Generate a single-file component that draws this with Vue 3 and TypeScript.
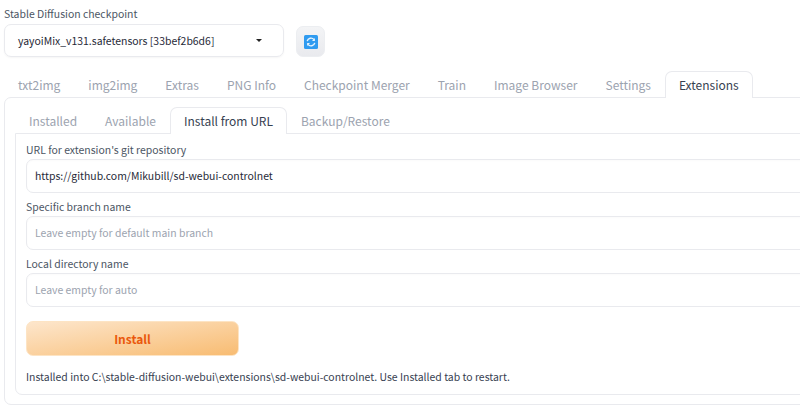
<script setup lang="ts">
const mainTabs = ['txt2img', 'img2img', 'Extras', 'PNG Info', 'Checkpoint Merger', 'Train', 'Image Browser', 'Settings', 'Extensions']
const subTabs = ['Installed', 'Available', 'Install from URL', 'Backup/Restore']
</script>

<template>
  <div class="page">
    <div class="label top-label">Stable Diffusion checkpoint</div>
    <div class="model-row">
      <div class="select">
        <span>yayoiMix_v131.safetensors [33bef2b6d6]</span>
        <i class="caret"></i>
      </div>
      <button class="refresh" type="button" aria-label="Refresh">
        <svg width="14" height="14" viewBox="0 0 14 14">
          <rect width="14" height="14" rx="1.5" fill="#2f9bf0" />
          <path d="M3.2 6.2A3.9 3.9 0 0 1 10 4.6" fill="none" stroke="#e8f4fe" stroke-width="1.4" />
          <path d="M10.9 3v3H8z" fill="#e8f4fe" />
          <path d="M10.8 7.8A3.9 3.9 0 0 1 4 9.4" fill="none" stroke="#e8f4fe" stroke-width="1.4" />
          <path d="M3.1 11V8H6z" fill="#e8f4fe" />
        </svg>
      </button>
    </div>

    <div class="tabs main-tabs">
      <span v-for="t in mainTabs" :key="t" class="tab" :class="{ active: t === 'Extensions' }">{{ t }}</span>
    </div>
    <div class="outer">
      <div class="tabs sub-tabs">
        <span v-for="t in subTabs" :key="t" class="tab" :class="{ active: t === 'Install from URL' }">{{ t }}</span>
      </div>
      <div class="inner">
        <label class="label">URL for extension's git repository</label>
        <div class="input value">https://github.com/Mikubill/sd-webui-controlnet</div>
        <label class="label">Specific branch name</label>
        <div class="input">Leave empty for default main branch</div>
        <label class="label">Local directory name</label>
        <div class="input">Leave empty for auto</div>
        <button class="install" type="button">Install</button>
        <p class="result">Installed into C:\stable-diffusion-webui\extensions\sd-webui-controlnet. Use Installed tab to restart.</p>
      </div>
    </div>
  </div>
</template>

<style>
html, body { margin: 0; background: #fff; overflow: hidden; }
</style>

<style scoped>
.page {
  width: 800px;
  height: 411px;
  overflow: hidden;
  box-sizing: border-box;
  padding: 6px 0 0 4px;
  font-family: "Noto Sans CJK SC", "Noto Sans", sans-serif;
  font-size: 10.45px;
  color: #374151;
}
.label {
  display: block;
  font-size: 10.45px;
  line-height: 16px;
  margin-bottom: 1px;
  color: #4b5563;
}
.top-label { margin-bottom: 2px; }
.model-row {
  display: flex;
  align-items: flex-start;
  gap: 12px;
}
.select {
  width: 280px;
  height: 33px;
  box-sizing: border-box;
  border: 1px solid #e9eaee;
  border-radius: 7px;
  display: flex;
  align-items: center;
  justify-content: space-between;
  padding: 0 16px 0 13px;
  color: #1f2937;
  white-space: nowrap;
  box-shadow: 0 1px 2px rgba(0, 0, 0, 0.04);
}
.caret {
  width: 0;
  height: 0;
  border-left: 3.5px solid transparent;
  border-right: 3.5px solid transparent;
  border-top: 3.5px solid #222;
  margin-right: 5px;
}
.refresh {
  width: 29px;
  height: 31px;
  margin-top: 2px;
  padding: 0;
  border: 1px solid #eceef1;
  border-radius: 7px;
  background: linear-gradient(#f3f4f6, #e9eaee);
  display: flex;
  align-items: center;
  justify-content: center;
}
.tabs {
  display: flex;
  font-size: 12px;
  line-height: 20px;
  color: #9ca3af;
}
.tab {
  box-sizing: border-box;
  padding: 3px 13px;
  height: 26px;
  border: 1px solid transparent;
  border-bottom: 0;
  border-radius: 7px 7px 0 0;
  white-space: nowrap;
}
.tab.active {
  color: #374151;
  background: #fff;
  border-color: #e9eaee;
  position: relative;
  z-index: 1;
  height: 27px;
  margin-bottom: -1px;
}
.main-tabs { margin-top: 14px; }
.outer {
  width: 900px;
  height: 307.5px;
  box-sizing: border-box;
  border: 1px solid #e9eaee;
  border-radius: 7px 0 0 7px;
  padding: 9px 0 0 10px;
}
.inner {
  height: 261.5px;
  box-sizing: border-box;
  border: 1px solid #e9eaee;
  border-radius: 0 0 0 7px;
  padding: 8px 0 0 10px;
}
.input {
  height: 34px;
  box-sizing: border-box;
  border: 1px solid #e9eaee;
  border-radius: 7px;
  line-height: 31px;
  padding-left: 8px;
  font-size: 10.45px;
  color: #9ca3af;
  margin-bottom: 6px;
  box-shadow: inset 0 1px 2px rgba(0, 0, 0, 0.02);
}
.input.value { color: #1f2937; }
.install {
  display: block;
  width: 213px;
  height: 35px;
  margin-top: 14px;
  padding: 0;
  border: 1px solid #fde4c4;
  border-radius: 7px;
  background: linear-gradient(to bottom right, #fde6cc, #f8bc72);
  color: #ea580c;
  font: 600 12px/33px "Noto Sans CJK SC", "Noto Sans", sans-serif;
}
.result {
  margin: 13px 0 0;
  font-size: 10.45px;
  line-height: 16px;
  color: #374151;
}
</style>
